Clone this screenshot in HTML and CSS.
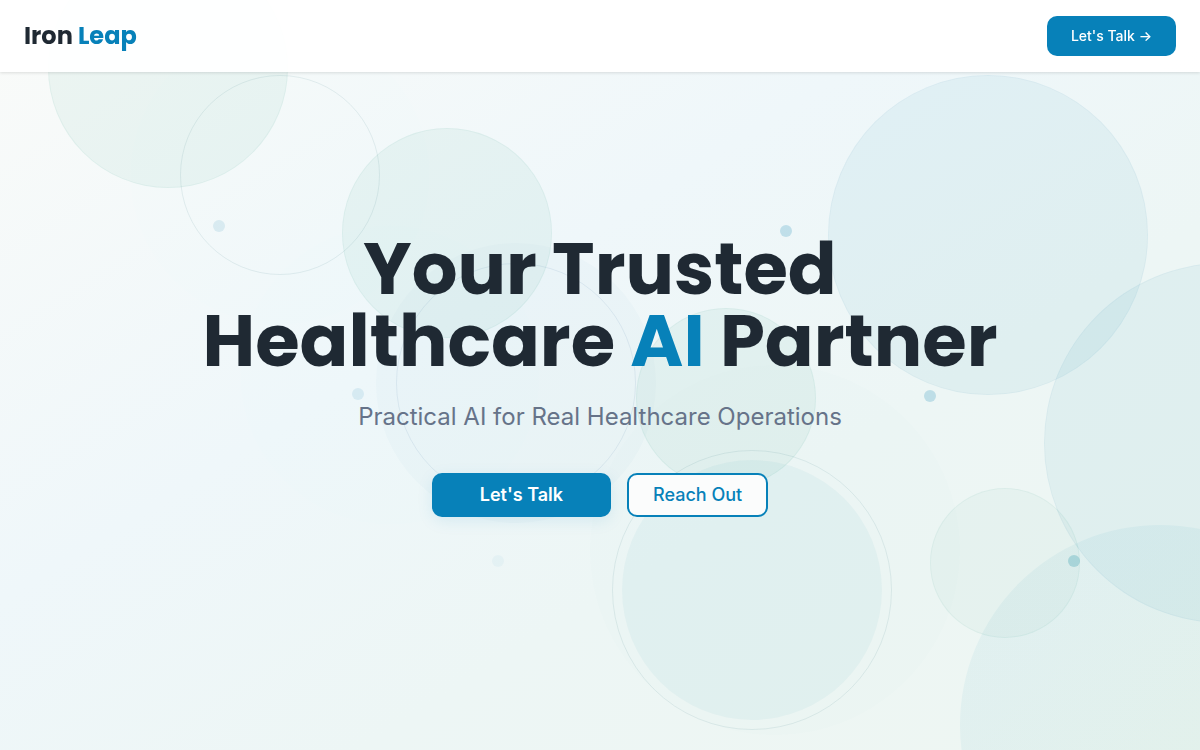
FILE: index.html
```html
<!DOCTYPE html>
<html lang="en">

<head>
     <meta charset="UTF-8">
     <title>Iron Leap</title>
     <meta name="viewport" content="width=device-width, initial-scale=1.0">
     <link rel="stylesheet" href="styles.css">
</head>

<body>

     <header class="navbar">
          <a class="logo" href="#">Iron <span class="accent">Leap</span></a>
          <button class="btn btn-nav" type="button">Let's Talk →</button>
     </header>

     <main class="hero">
          <!-- Background circles -->
          <div class="shapes" aria-hidden="true">
               <span class="circle halo halo-1"></span>
               <span class="circle halo halo-2"></span>
               <span class="circle halo halo-3"></span>
               <span class="circle soft soft-1"></span>
               <span class="circle soft soft-2"></span>
               <span class="circle blue blue-1"></span>
               <span class="circle blue blue-2"></span>
               <span class="circle blue blue-3"></span>
               <span class="circle green green-1"></span>
               <span class="circle green green-2"></span>
               <span class="circle green green-3"></span>
               <span class="circle green green-4"></span>
               <span class="circle ring ring-1"></span>
               <span class="circle ring ring-2"></span>
               <span class="circle ring ring-3"></span>
               <span class="circle dot dot-1"></span>
               <span class="circle dot dot-2"></span>
               <span class="circle dot dot-3"></span>
               <span class="circle dot dot-4"></span>
               <span class="circle dot dot-5"></span>
               <span class="circle dot dot-6"></span>
          </div>

          <div class="hero-content">
               <h1>Your Trusted<br>Healthcare <span class="accent">AI</span> Partner</h1>
               <p class="subtitle">Practical AI for Real Healthcare Operations</p>
               <div class="actions">
                    <button class="btn btn-primary" type="button">Let's Talk</button>
                    <button class="btn btn-outline" type="button">Reach Out</button>
               </div>
          </div>
     </main>

</body>

</html>
```

FILE: styles.css
```css
:root {
     --primary: #0781b9;
     --dark: #1f2933;
     --muted: #667389;
     --heading: Poppins, Inter, sans-serif;
     --body: Inter, sans-serif;
}

* {
     box-sizing: border-box;
     margin: 0;
     padding: 0;
}

body {
     font-family: var(--body);
     color: var(--dark);
}

.accent {
     color: var(--primary);
}

/* Navbar */
.navbar {
     position: fixed;
     top: 0;
     left: 0;
     right: 0;
     z-index: 10;
     display: flex;
     justify-content: space-between;
     align-items: center;
     padding: 16px 24px;
     background: rgba(255, 255, 255, 0.95);
     box-shadow: 0 1px 3px rgba(0, 0, 0, 0.12);
}

.logo {
     font-family: var(--heading);
     font-size: 24px;
     line-height: 32px;
     font-weight: 700;
     color: var(--dark);
     text-decoration: none;
}

.btn {
     font-family: var(--body);
     font-size: 18px;
     line-height: 24px;
     font-weight: 500;
     border: none;
     border-radius: 10px;
     cursor: pointer;
}

.btn-nav {
     padding: 8px 24px;
     font-size: 14px;
     color: white;
     background: var(--primary);
}

.btn-primary {
     padding: 10px 48px;
     font-weight: 600;
     color: white;
     background: var(--primary);
     box-shadow: 0 4px 16px rgba(7, 129, 185, 0.1);
}

.btn-outline {
     padding: 8px 24px;
     color: var(--primary);
     background: #fbfcfc;
     border: 2px solid var(--primary);
}

/* Hero */
.hero {
     position: relative;
     display: flex;
     justify-content: center;
     align-items: center;
     min-height: 100vh;
     overflow: hidden;
     background: linear-gradient(to bottom right, #fafbf9 0%, #eff7fa 40%, #edf6f5 65%, #eef6f2 100%);
}

.hero-content {
     position: relative;
     padding: 0 24px;
     text-align: center;
}

h1 {
     margin-bottom: 24px;
     font-family: var(--heading);
     font-size: 72px;
     line-height: 72px;
     font-weight: 700;
}

.subtitle {
     margin-bottom: 40px;
     font-size: 24px;
     line-height: 32px;
     color: var(--muted);
}

.actions {
     display: flex;
     justify-content: center;
     gap: 16px;
}

/* Background shapes */
.shapes {
     position: absolute;
     inset: 0;
}

.circle {
     position: absolute;
     border-radius: 50%;
}

.halo {
     background: rgba(7, 129, 185, 0.005);
}

.halo-1 {
     left: 130px;
     top: 25px;
     width: 300px;
     height: 300px;
}

.halo-2 {
     left: 20%;
     top: 30%;
     width: 300px;
     height: 300px;
}

.halo-3 {
     left: 590px;
     top: 365px;
     width: 370px;
     height: 370px;
     background: rgba(60, 130, 130, 0.012);
}

.soft {
     background: rgba(7, 130, 170, 0.045);
}

.soft-1 {
     left: 376px;
     top: 243px;
     width: 280px;
     height: 280px;
     background: rgba(40, 110, 160, 0.024);
}

.soft-2 {
     left: 622px;
     top: 460px;
     width: 260px;
     height: 260px;
}

.blue {
     border: 1px solid rgba(7, 110, 150, 0.04);
     background: rgba(7, 140, 175, 0.06);
}

.blue-1 {
     left: 69%;
     top: 10%;
     width: 320px;
     height: 320px;
}

.blue-2 {
     left: 87%;
     top: 35%;
     width: 360px;
     height: 360px;
}

.blue-3 {
     left: 80%;
     top: 70%;
     width: 400px;
     height: 400px;
     border: none;
     background: linear-gradient(135deg, rgba(7, 140, 175, 0.055) 25%, rgba(20, 150, 120, 0.055) 60%);
}

.green {
     border: 1px solid rgba(20, 130, 110, 0.05);
     background: rgba(20, 150, 110, 0.055);
}

.green-1 {
     left: 4%;
     top: -7%;
     width: 240px;
     height: 240px;
}

.green-2 {
     left: 342px;
     top: 17%;
     width: 210px;
     height: 210px;
}

.green-3 {
     left: 53%;
     top: 41%;
     width: 180px;
     height: 180px;
}

.green-4 {
     left: 930px;
     top: 65%;
     width: 150px;
     height: 150px;
     background: rgba(20, 150, 110, 0.035);
}

.ring {
     border: 1px solid rgba(40, 110, 120, 0.1);
}

.ring-1 {
     left: 15%;
     top: 10%;
     width: 200px;
     height: 200px;
}

.ring-2 {
     left: 33%;
     top: 35%;
     width: 240px;
     height: 240px;
     border-color: rgba(60, 110, 160, 0.1);
}

.ring-3 {
     left: 51%;
     top: 60%;
     width: 280px;
     height: 280px;
}

.dot {
     width: 12px;
     height: 12px;
     background: rgba(7, 129, 175, 0.2);
}

.dot-1 {
     left: 213px;
     top: 220px;
     opacity: 0.55;
}

.dot-2 {
     left: 352px;
     top: 388px;
     opacity: 0.5;
}

.dot-3 {
     left: 492px;
     top: 555px;
     opacity: 0.2;
}

.dot-4 {
     left: 65%;
     top: 30%;
}

.dot-5 {
     left: 77%;
     top: 52%;
}

.dot-6 {
     left: 89%;
     top: 74%;
     background: rgba(7, 140, 160, 0.24);
}
```
